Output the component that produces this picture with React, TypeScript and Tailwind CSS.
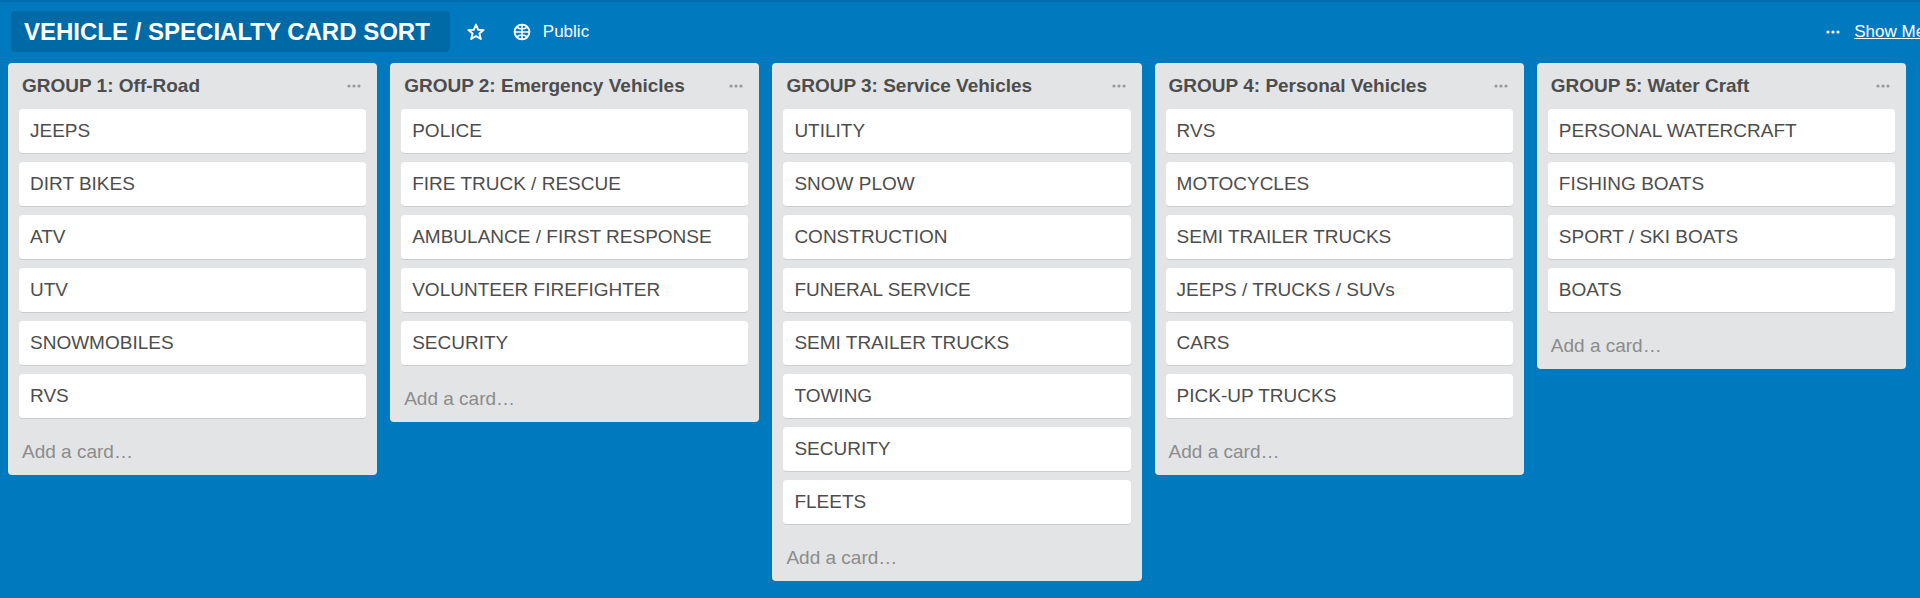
import React from "react";

type Group = { title: string; cards: string[] };

const groups: Group[] = [
  {
    title: "GROUP 1: Off-Road",
    cards: ["JEEPS", "DIRT BIKES", "ATV", "UTV", "SNOWMOBILES", "RVS"],
  },
  {
    title: "GROUP 2: Emergency Vehicles",
    cards: ["POLICE", "FIRE TRUCK / RESCUE", "AMBULANCE / FIRST RESPONSE", "VOLUNTEER FIREFIGHTER", "SECURITY"],
  },
  {
    title: "GROUP 3: Service Vehicles",
    cards: [
      "UTILITY",
      "SNOW PLOW",
      "CONSTRUCTION",
      "FUNERAL SERVICE",
      "SEMI TRAILER TRUCKS",
      "TOWING",
      "SECURITY",
      "FLEETS",
    ],
  },
  {
    title: "GROUP 4: Personal Vehicles",
    cards: ["RVS", "MOTOCYCLES", "SEMI TRAILER TRUCKS", "JEEPS / TRUCKS / SUVs", "CARS", "PICK-UP TRUCKS"],
  },
  {
    title: "GROUP 5: Water Craft",
    cards: ["PERSONAL WATERCRAFT", "FISHING BOATS", "SPORT / SKI BOATS", "BOATS"],
  },
];

function Dots() {
  return (
    <svg width="14" height="4" viewBox="0 0 14 4" fill="currentColor" aria-hidden="true">
      <circle cx="2" cy="2" r="1.6" />
      <circle cx="7" cy="2" r="1.6" />
      <circle cx="12" cy="2" r="1.6" />
    </svg>
  );
}

function Star() {
  return (
    <svg width="18" height="18" viewBox="0 0 18 18" fill="none" stroke="currentColor" strokeWidth="1.9" strokeLinejoin="round" aria-hidden="true">
      <path d="M9 1.6 11.1 6.7 16.6 7.1 12.4 10.6 13.8 16 9 13.1 4.2 16 5.6 10.6 1.4 7.1 6.9 6.7Z" />
    </svg>
  );
}

function Globe() {
  return (
    <svg width="18" height="18" viewBox="0 0 18 18" fill="none" stroke="currentColor" aria-hidden="true">
      <circle cx="9" cy="9" r="7.4" strokeWidth="1.9" />
      <path strokeWidth="1.6" d="M9 1.6v14.8M1.6 9h14.8M3.8 4.2C6.6 6.6 11.4 6.6 14.2 4.2M3.8 13.8C6.6 11.4 11.4 11.4 14.2 13.8" />
    </svg>
  );
}

function List({ title, cards }: Group) {
  return (
    <section className="rounded bg-[#e2e4e6] px-[11px]">
      <header className="flex h-[46px] items-center justify-between pr-[5px] pl-[3px]">
        <h2 className="text-[19px] leading-6 font-bold whitespace-nowrap">{title}</h2>
        <button type="button" aria-label="List actions" className="text-[#999]">
          <Dots />
        </button>
      </header>
      <ul className="flex flex-col gap-2">
        {cards.map((card) => (
          <li key={card} className="rounded border-b border-[#ccc] bg-white px-[11px] py-[10px] text-[19px] leading-6 whitespace-nowrap">
            {card}
          </li>
        ))}
      </ul>
      <button type="button" className="mt-2 block w-full px-[3px] pt-[13px] pb-[11px] text-left text-[19px] leading-6 text-[#8c8c8c]">
        Add a card…
      </button>
    </section>
  );
}

export default function App() {
  return (
    <div className="min-h-screen overflow-hidden border-t-2 border-[#006eae] bg-[#0079bf] font-['Liberation_Sans',Arial,sans-serif] text-[#4d4d4d]">
      <header className="flex items-center justify-between pt-[9px] pl-[11px] text-[17px] leading-5 whitespace-nowrap text-white">
        <div className="flex items-center">
          <h1 className="rounded bg-[#006aa7] pt-[5px] pr-5 pb-1 pl-[13px] text-[24px] leading-8 font-bold">
            VEHICLE / SPECIALTY CARD SORT
          </h1>
          <button type="button" aria-label="Star board" className="ml-[17px]">
            <Star />
          </button>
          <button type="button" className="ml-7 flex items-center gap-3">
            <Globe />
            Public
          </button>
        </div>
        <div className="-mr-6 flex items-center gap-[14px]">
          <Dots />
          <a href="#menu" className="underline">
            Show Menu
          </a>
        </div>
      </header>
      <main className="grid grid-cols-5 items-start gap-[13px] pt-[11px] pr-[14px] pb-4 pl-2">
        {groups.map((group) => (
          <List key={group.title} {...group} />
        ))}
      </main>
    </div>
  );
}
